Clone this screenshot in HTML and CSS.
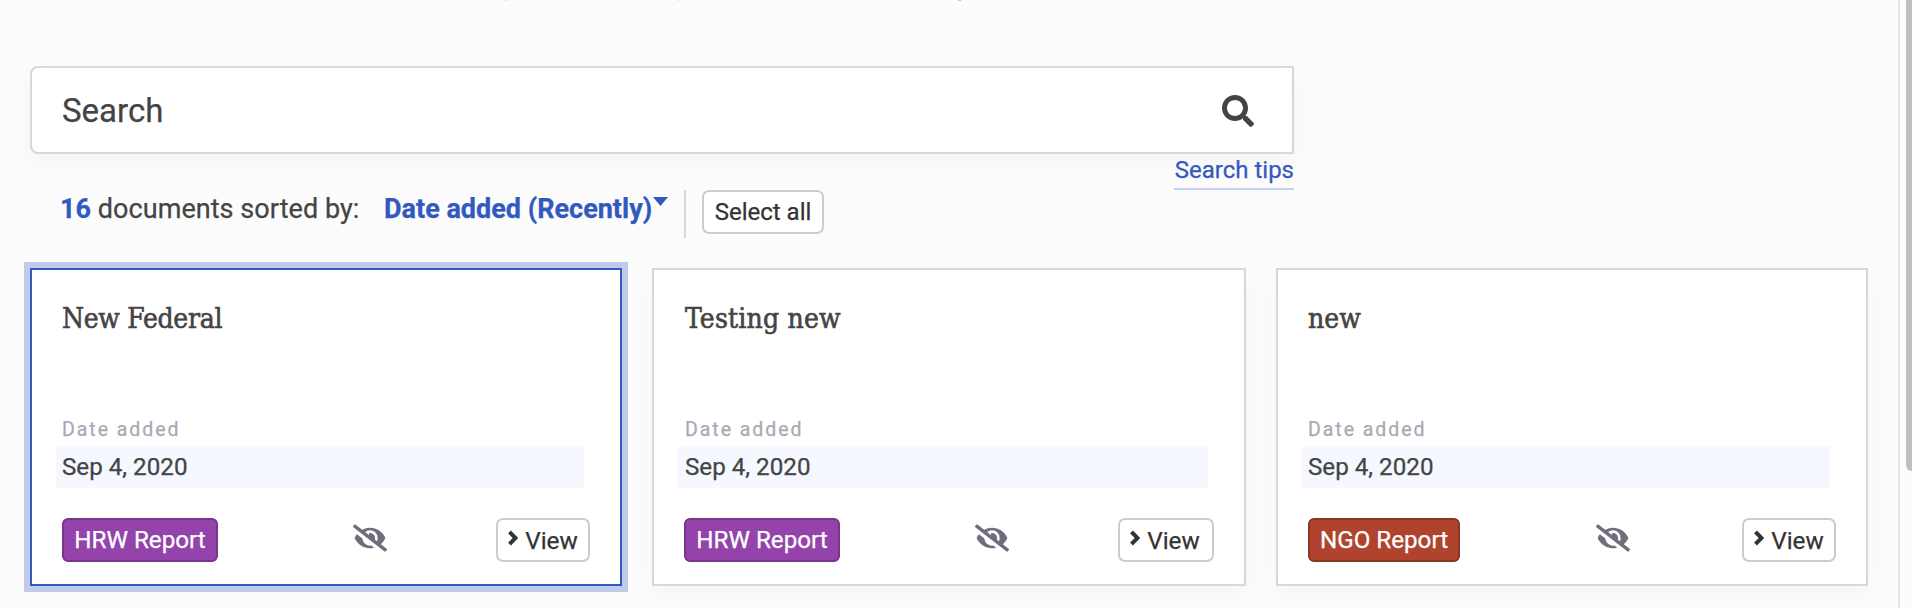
FILE: index.html
```html
<!DOCTYPE html>
<html lang="en">
<head>
<meta charset="utf-8">
<title>Library</title>
<link rel="stylesheet" href="styles.css">
</head>
<body>
<svg class="defs" aria-hidden="true">
  <symbol id="eye-slash" viewBox="0 0 640 512"><path d="M320 400c-75.85 0-137.25-58.71-142.9-133.11L72.2 185.82c-13.79 17.3-26.48 35.59-36.72 55.59a32.35 32.35 0 0 0 0 29.19C89.71 376.41 197.07 448 320 448c26.91 0 52.87-4 77.89-10.46L346 397.39a144.13 144.13 0 0 1-26 2.61zm313.82 58.1l-110.55-85.44a331.25 331.25 0 0 0 81.25-102.07 32.35 32.35 0 0 0 0-29.19C550.29 135.59 442.93 64 320 64a308.15 308.15 0 0 0-147.32 37.7L45.46 3.37A16 16 0 0 0 23 6.18L3.37 31.45A16 16 0 0 0 6.18 53.9l588.36 454.73a16 16 0 0 0 22.46-2.81l19.64-25.27a16 16 0 0 0-2.82-22.45zm-183.72-142l-39.3-30.38A94.75 94.75 0 0 0 416 256a94.76 94.76 0 0 0-121.31-92.21A47.65 47.65 0 0 1 304 192a46.64 46.64 0 0 1-1.54 10l-73.61-56.89A142.31 142.31 0 0 1 320 112a143.92 143.92 0 0 1 144 144c0 21.63-5.29 41.79-13.9 60.11z"/></symbol>
  <symbol id="angle" viewBox="0 0 10 16"><path d="M1.500 1.800 7.500 8 1.500 14.200" fill="none" stroke="currentColor" stroke-width="4"/></symbol>
</svg>
<div class="app">
  <main class="main">
    <div class="marks"><i></i><i></i><i></i><i></i></div>
    <div class="search">
      <span>Search</span>
      <svg class="search-icon" viewBox="0 0 512 512"><path d="M505 442.700L405.300 343c-4.500-4.500-10.600-7-17-7H372c27.600-35.300 44-79.700 44-128C416 93.100 322.900 0 208 0S0 93.100 0 208s93.100 208 208 208c48.300 0 92.700-16.400 128-44v16.300c0 6.400 2.500 12.500 7 17l99.700 99.700c9.400 9.400 24.600 9.400 33.900 0l28.300-28.300c9.400-9.400 9.400-24.600.1-34zM208 336c-70.700 0-128-57.200-128-128 0-70.700 57.200-128 128-128 70.700 0 128 57.200 128 128 0 70.700-57.200 128-128 128z"/></svg>
    </div>
    <div class="tips-row"><a class="tips">Search tips</a></div>
    <div class="tools">
      <span class="count"><b>16</b> documents sorted by:</span>
      <b class="sort">Date added (Recently)</b>
      <span class="caret"></span>
      <span class="divider"></span>
      <button class="btn select">Select all</button>
    </div>
    <div class="cards">
      <article class="card selected">
        <h2>New Federal</h2>
        <div class="label">Date added</div>
        <div class="value">Sep 4, 2020</div>
        <footer><span class="tag purple">HRW Report</span><svg class="eye"><use href="#eye-slash"/></svg><button class="btn view"><svg class="angle"><use href="#angle"/></svg>View</button></footer>
      </article>
      <article class="card middle">
        <h2>Testing new</h2>
        <div class="label">Date added</div>
        <div class="value">Sep 4, 2020</div>
        <footer><span class="tag purple">HRW Report</span><svg class="eye"><use href="#eye-slash"/></svg><button class="btn view"><svg class="angle"><use href="#angle"/></svg>View</button></footer>
      </article>
      <article class="card">
        <h2>new</h2>
        <div class="label">Date added</div>
        <div class="value">Sep 4, 2020</div>
        <footer><span class="tag red">NGO Report</span><svg class="eye"><use href="#eye-slash"/></svg><button class="btn view"><svg class="angle"><use href="#angle"/></svg>View</button></footer>
      </article>
    </div>
  </main>
  <aside class="scroll"><div class="thumb"></div></aside>
</div>
</body>
</html>
```
FILE: styles.css
```css
* { box-sizing: border-box; }
body { margin: 0; background: #fcfcfc; color: #444; font-family: Roboto, sans-serif; -webkit-text-stroke: .25px currentColor; }
.defs { display: none; }
.app { display: flex; width: 1912px; height: 608px; overflow: hidden; }
.main { width: 1898px; padding-left: 30px; }
.marks { display: flex; height: 66px; padding-left: 474px; }
.marks i { width: 5px; height: 1px; background: #efefef; }
.marks i:nth-child(2) { width: 3px; margin-left: 168px; }
.marks i:nth-child(3) { width: 3px; margin-left: 198px; }
.marks i:nth-child(4) { width: 3px; margin-left: 77px; background: #c8c8c8; }
.search { display: flex; align-items: center; justify-content: space-between; width: 1264px; height: 88px; padding: 1px 38px 0 30px; border: 2px solid #d7d7de; border-radius: 8px 0 0 8px; background: #fff; font-size: 33px; box-shadow: 0 8px 24px rgba(0, 0, 0, .035); }
.search-icon { width: 32px; height: 34px; fill: #444; }
.tips-row { display: flex; justify-content: flex-end; width: 1264px; height: 36px; }
.tips { width: 120px; height: 36px; border-bottom: 2px solid #c4d2f0; color: #3159bf; font-size: 24px; line-height: 32px; text-align: right; white-space: nowrap; }
.tools { display: flex; height: 78px; padding-left: 30px; font-size: 27px; line-height: 38px; white-space: nowrap; }
.tools b { color: #3159bf; }
.count { width: 324px; letter-spacing: .05px; }
.sort { width: 269px; }
.caret { width: 15px; height: 9px; margin: 7px 16px 0 0; background: #3159bf; clip-path: polygon(0 0, 100% 0, 50% 100%); }
.divider { width: 2px; height: 48px; background: #d7d7de; }
.btn { display: flex; align-items: center; justify-content: center; height: 44px; padding: 0; border: 2px solid #ccc; border-radius: 7px; background: #fff; color: #333; font: 24px Roboto, sans-serif; white-space: nowrap; }
.select { width: 122px; margin-left: 16px; }
.cards { display: grid; grid-template-columns: 592px 594px 592px; gap: 30px; }
.card { height: 318px; padding: 30px 30px 0; border: 2px solid #d7d7de; background: #fff; box-shadow: 0 8px 24px rgba(0, 0, 0, .035); }
.selected { border-color: #3159bf; box-shadow: 0 0 0 6px #c0caea; }
h2 { height: 110px; margin: 0; font: 500 28px/38px "Roboto Slab", "DejaVu Serif Condensed", "DejaVu Serif", serif; -webkit-text-stroke: .6px currentColor; }
.selected h2 { letter-spacing: -.3px; }
.middle h2 { letter-spacing: .2px; padding-left: 1px; }
.label { height: 36px; color: #a9a9b3; font-size: 19.500px; line-height: 39px; letter-spacing: 1.950px; }
.value { height: 42px; margin: 0 6px 0 -6px; padding-left: 6px; background: #f5f8ff; font-size: 24.200px; line-height: 43px; }
footer { display: flex; align-items: flex-start; justify-content: space-between; margin-top: 30px; }
.tag { display: flex; align-items: center; justify-content: center; width: 156px; height: 44px; border: 2px solid #773688; border-radius: 6px; background: #9343aa; color: #fff; font-size: 24.200px; white-space: nowrap; }
.red { width: 152px; border-color: #8b3525; background: #b0432d; }
.eye { width: 34px; height: 28px; margin: 6px 0 0 26px; fill: #6e6e7c; }
.red + .eye { margin-left: 24px; }
.view { width: 94px; gap: 7px; font-size: 24.300px; }
.middle .view { width: 96px; padding-right: 2px; }
.middle .label, .middle .value { text-indent: 1px; }
.angle { width: 10px; height: 16px; margin-top: -4px; }
.scroll { width: 14px; border-left: 2px solid #e7e7e7; padding-left: 6px; overflow: hidden; }
.thumb { width: 12px; height: 471px; border-radius: 0 0 6px 6px; background: #bfbfbf; }
```
